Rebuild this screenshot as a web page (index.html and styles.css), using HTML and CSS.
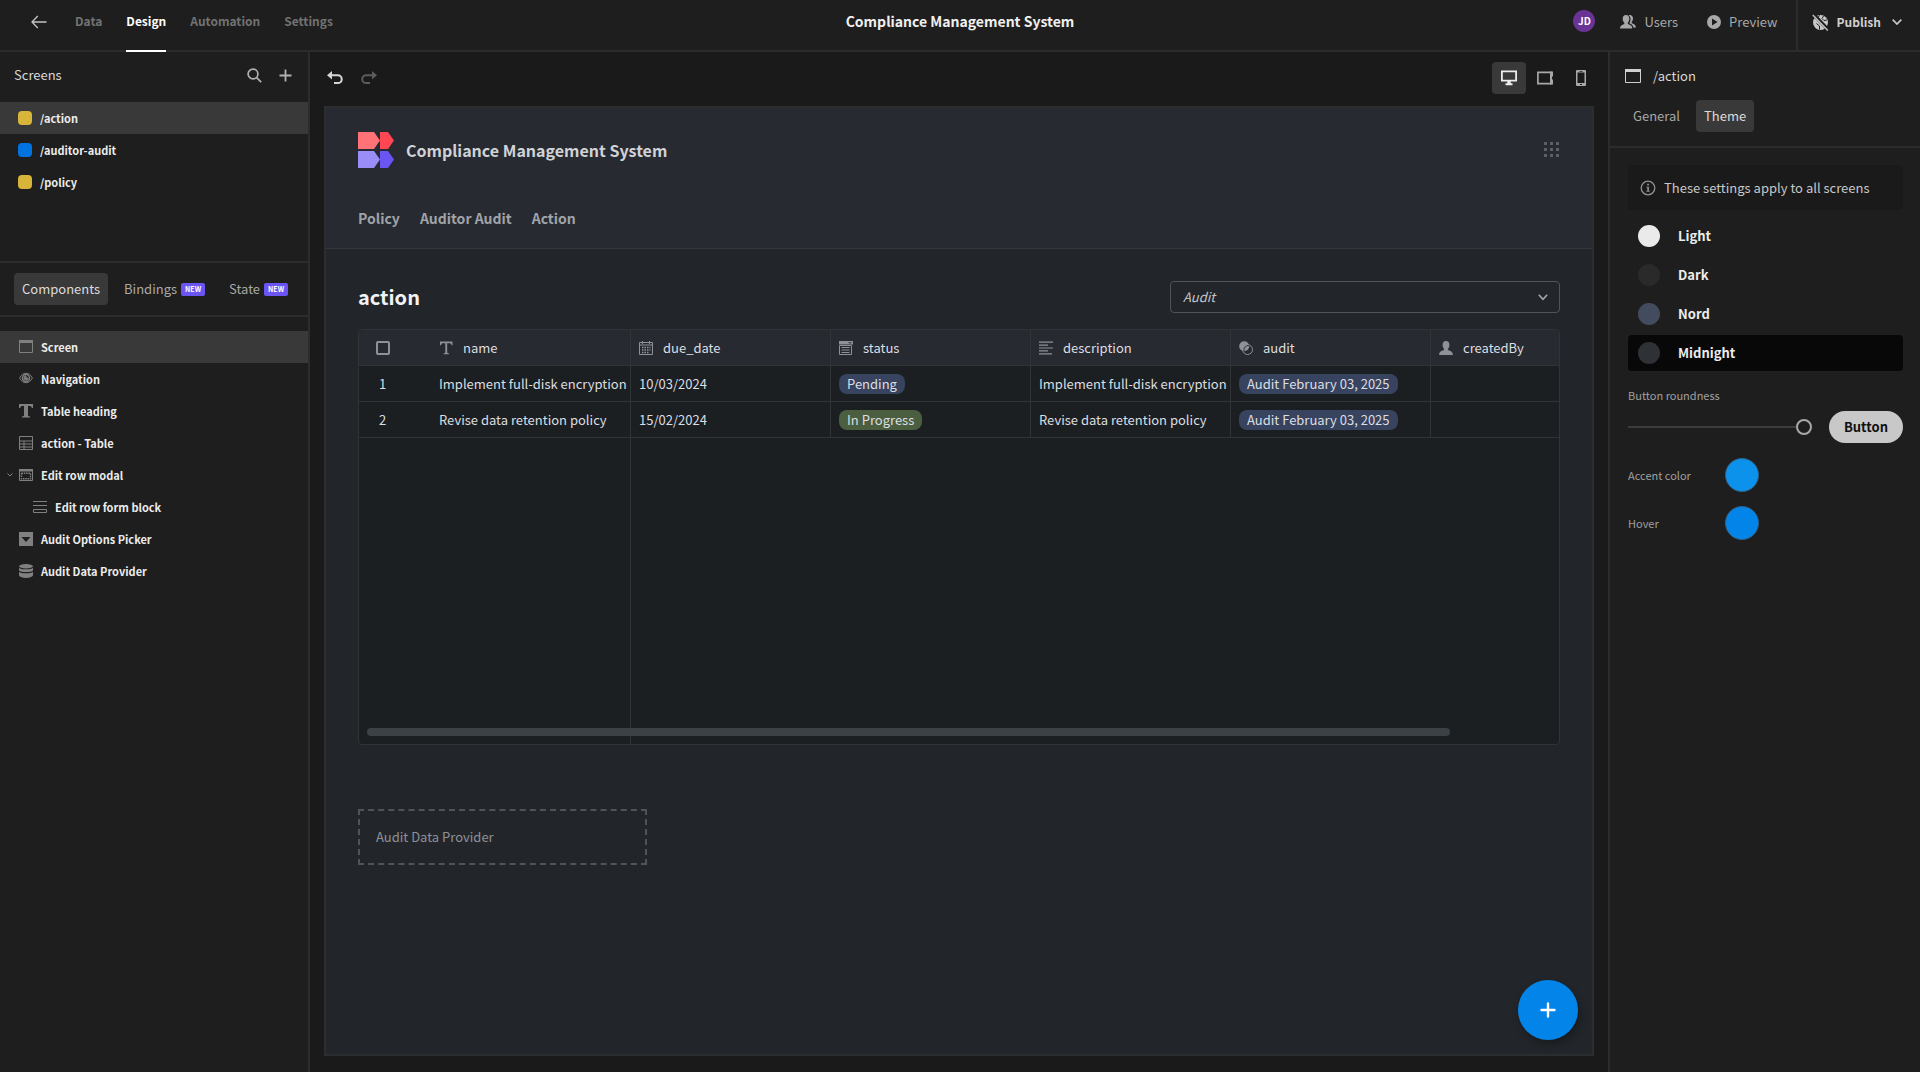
FILE: index.html
```html
<!DOCTYPE html>
<html lang="en">
<head>
    <meta charset="UTF-8">
    <meta name="viewport" content="width=device-width, initial-scale=1.0">
    <title>Compliance Management System</title>
    <link rel="stylesheet" href="styles.css">
</head>
<body>

<header class="topbar">
    <nav class="topbar-nav">
        <a href="#" class="back" aria-label="Back">
            <svg width="16" height="16" viewBox="0 0 16 16" fill="none" stroke="#c4c4c4" stroke-width="1.3"><path d="M15.500 8H1M6.800 2 1 8l5.800 6"/></svg>
        </a>
        <a href="#">Data</a>
        <a href="#" class="active">Design</a>
        <a href="#">Automation</a>
        <a href="#">Settings</a>
    </nav>
    <h1 class="topbar-title">Compliance Management System</h1>
    <div class="topbar-actions">
        <span class="avatar">JD</span>
        <button class="top-button users">
            <svg width="16" height="16" viewBox="0 0 16 16" fill="#a8a8a8"><path d="M6 1C8.200 1 9.300 2.600 9.300 4.800c0 1.700-.7 3.200-1.500 4v1.100c1.700.7 4 1.300 4.300 3.400l.1 1.200H0c0-3 2.500-3.800 4.300-4.600V8.800C3.400 8 2.700 6.500 2.700 4.800 2.700 2.600 3.800 1 6 1z"/><path d="M9.300 1c2-.3 3.700 1 3.700 3.300 0 1.700-.6 3-1.400 3.800v1c1.700.8 4.200 1.600 4.400 4.400h-2.600c-.4-2.300-2-3.400-4.100-4.200 1.700-2.600 2-6-.8-8z"/></svg>
            Users
        </button>
        <button class="top-button">
            <svg width="14" height="14" viewBox="0 0 14 14" fill="#a8a8a8"><path fill-rule="evenodd" d="M7 0a7 7 0 1 0 0 14A7 7 0 0 0 7 0zM5 3.500 10.600 7 5 10.500z"/></svg>
            Preview
        </button>
        <button class="top-button publish">
            <svg width="17" height="17" viewBox="0 0 17 17"><circle cx="8.500" cy="8.500" r="7.500" fill="#c8c8c8"/><path d="M7.500 1.500 6 3.500l1.500 1M11.500 2 10 4.500l2 2 3-.5M7.500 15.500V12L4.500 9.500" fill="none" stroke="#1e1e1e" stroke-width="1"/><path d="m1.500.5 15 15.500" stroke="#1e1e1e" stroke-width="3.500"/><path d="m.8 1 15 15.500" stroke="#c8c8c8" stroke-width="1.400"/></svg>
            Publish
            <svg class="chev" width="10" height="6" viewBox="0 0 10 6" fill="none" stroke="#c8c8c8" stroke-width="1.700"><path d="m.7.7 4.300 4.300L9.300.7"/></svg>
        </button>
    </div>
</header>

<div class="workspace">
    <aside class="left-panel">
        <section class="screens">
            <div class="screens-head">
                <h2>Screens</h2>
                <button class="icon-button" aria-label="Search">
                    <svg width="15" height="15" viewBox="0 0 15 15" fill="none" stroke="#b0b0b0" stroke-width="1.700"><circle cx="6" cy="6" r="4.900"/><path d="m9.600 9.600 4.600 4.600"/></svg>
                </button>
                <button class="icon-button" aria-label="Add screen">
                    <svg width="13" height="13" viewBox="0 0 13 13" stroke="#b0b0b0" stroke-width="1.800"><path d="M6.500.5v12M.5 6.500h12"/></svg>
                </button>
            </div>
            <ul class="list">
                <li><button class="row selected"><span class="swatch yellow"></span>/action</button></li>
                <li><button class="row"><span class="swatch blue"></span>/auditor-audit</button></li>
                <li><button class="row"><span class="swatch yellow"></span>/policy</button></li>
            </ul>
        </section>

        <div class="tabs left-tabs">
            <button class="tab active">Components</button>
            <button class="tab">Bindings <span class="badge">NEW</span></button>
            <button class="tab">State <span class="badge">NEW</span></button>
        </div>

        <ul class="list tree">
            <li><button class="row selected">
                <svg width="14" height="14" viewBox="0 0 14 14"><path d="M.5 1.500h13v11H.5z" fill="none" stroke="#808080"/><path d="M0 0h14v3H0z" fill="#808080"/></svg>
                Screen
            </button></li>
            <li><button class="row">
                <svg width="14" height="14" viewBox="0 0 14 14" fill="none" stroke="#808080"><path d="M.6 6C2.500 2.500 4.500 1.300 7 1.300S11.500 2.500 13.400 6C11.500 9.500 9.500 10.700 7 10.700S2.500 9.500.6 6z"/><circle cx="7" cy="6" r="3.500" stroke-width="1.500"/><path d="M7 4a2 2 0 1 0 2 2H7z" fill="#808080"/></svg>
                Navigation
            </button></li>
            <li><button class="row">
                <svg width="14" height="14" viewBox="0 0 14 14" fill="#808080"><path d="M0 0h14v4h-1.200c-.3-1.500-.8-2-2.500-2H9v9c0 1 .4 1.300 2 1.400V13.500H3v-1.100c1.600-.1 2-.4 2-1.400V2H3.700c-1.700 0-2.200.5-2.500 2H0z"/></svg>
                Table heading
            </button></li>
            <li><button class="row">
                <svg width="14" height="14" viewBox="0 0 14 14" fill="none" stroke="#808080"><path d="M.5.5h13v13H.5zM.5 5h13M.5 8h13M.5 11h13M5 5v8.500"/></svg>
                action - Table
            </button></li>
            <li><button class="row">
                <svg class="caret" width="6" height="4" viewBox="0 0 6 4" fill="none" stroke="#808080"><path d="m.5.5 2.500 2.500L5.500.5"/></svg>
                <svg width="14" height="14" viewBox="0 0 14 14"><path d="M.5 1.500h13v11H.5z" fill="none" stroke="#808080"/><path d="M0 1h14v2.500H0z" fill="#808080"/><path d="M2.500 5.200h9v5.600h-9z" fill="none" stroke="#808080" stroke-width="1.400" stroke-dasharray="1.500 .8"/></svg>
                Edit row modal
            </button></li>
            <li><button class="row nested">
                <svg width="14" height="14" viewBox="0 0 14 14" fill="none" stroke="#808080"><path d="M0 1.500h14M0 5.500h14M.5 9.500h13v3H.5z"/></svg>
                Edit row form block
            </button></li>
            <li><button class="row">
                <svg width="14" height="14" viewBox="0 0 14 14"><path d="M0 0h14v14H0z" fill="#808080"/><path d="M2.500 5h9L7 10z" fill="#1e1e1e"/></svg>
                Audit Options Picker
            </button></li>
            <li><button class="row">
                <svg width="14" height="14" viewBox="0 0 14 14" fill="#808080"><ellipse cx="7" cy="2.200" rx="7" ry="2.200"/><path d="M0 3.700c2 2 12 2 14 0v2.800c-1.500 2.100-12.500 2.100-14 0zM0 7.700c2 2 12 2 14 0v3.800c-1.500 3.200-12.500 3.200-14 0z"/></svg>
                Audit Data Provider
            </button></li>
        </ul>
    </aside>

    <main class="canvas">
        <div class="toolbar">
            <button class="icon-button" aria-label="Undo">
                <svg width="16" height="14" viewBox="0 0 16 14"><path d="M3.500 4.200h7.300a3.900 3.900 0 0 1 0 7.900H7" fill="none" stroke="#d6d6d6" stroke-width="2"/><path d="M0 4.200 5 0v8.400z" fill="#d6d6d6"/></svg>
            </button>
            <button class="icon-button" aria-label="Redo" disabled>
                <svg width="16" height="14" viewBox="0 0 16 14"><path d="M12.500 4.200H5.200a3.900 3.900 0 0 0 0 7.900H9" fill="none" stroke="#5c5c5c" stroke-width="2"/><path d="M16 4.200 11 0v8.400z" fill="#5c5c5c"/></svg>
            </button>
            <div class="devices">
                <button class="device active" aria-label="Desktop">
                    <svg width="16" height="16" viewBox="0 0 16 16"><path d="M.9 1.400h14.200v9.200H.9z" fill="none" stroke="#ececec" stroke-width="1.800"/><path d="M6.300 11h3.400v2.300h1.800v1.900h-7v-1.900h1.800z" fill="#ececec"/></svg>
                </button>
                <button class="device" aria-label="Tablet">
                    <svg width="16" height="14" viewBox="0 0 16 14"><path d="M.9 1.400h13v11.200H.9z" fill="none" stroke="#a8a8a8" stroke-width="1.700"/><path d="M13 .5h3v5h-1v3h1v5h-3z" fill="#a8a8a8"/></svg>
                </button>
                <button class="device" aria-label="Mobile">
                    <svg width="10" height="16" viewBox="0 0 10 16"><path fill-rule="evenodd" d="M1 0h8a1 1 0 0 1 1 1v14a1 1 0 0 1-1 1H1a1 1 0 0 1-1-1V1a1 1 0 0 1 1-1zm.5 2.500v10.500h7V2.500zM4 14v1h2v-1zM3.500.9v.8h3V.9z" fill="#a8a8a8"/></svg>
                </button>
            </div>
        </div>

        <div class="preview">
            <header class="app-header">
                <div class="app-brand">
                    <svg width="36" height="36" viewBox="0 0 36 36"><path d="M0 0h16l6 8.500-6 8.500H0z" fill="#ff7377"/><path d="M22 0h8l6 8.500-6 8.500h-8z" fill="#ff4653"/><path d="M0 19h16l6 8.500-6 8.500H0z" fill="#9a8df8"/><path d="M22 19h8l6 8.500-6 8.500h-8z" fill="#6a55f2"/></svg>
                    <span>Compliance Management System</span>
                    <button class="apps" aria-label="Apps">
                        <svg width="16" height="16" viewBox="0 0 16 16" fill="#5b5f66"><path d="M0 0h3v3H0zM6 0h3v3H6zM12 0h3v3h-3zM0 6h3v3H0zM6 6h3v3H6zM12 6h3v3h-3zM0 12h3v3H0zM6 12h3v3H6zM12 12h3v3h-3z"/></svg>
                    </button>
                </div>
                <nav class="app-nav">
                    <a href="#">Policy</a>
                    <a href="#">Auditor Audit</a>
                    <a href="#">Action</a>
                </nav>
            </header>

            <div class="app-body">
                <div class="heading-row">
                    <h2>action</h2>
                    <div class="select-wrap">
                        <select aria-label="Audit"><option>Audit</option></select>
                        <svg width="10" height="7" viewBox="0 0 10 7" fill="none" stroke="#a4a7ac" stroke-width="1.600"><path d="m.8.8 4.200 4.500L9.200.8"/></svg>
                    </div>
                </div>

                <div class="grid">
                    <table>
                        <colgroup><col class="col-check"><col><col><col><col><col><col></colgroup>
                        <thead>
                            <tr>
                                <th class="check"><input type="checkbox" aria-label="Select all rows"></th>
                                <th class="sticky"><div class="th"><svg width="14" height="14" viewBox="0 0 14 14" fill="#8e9198"><path d="M1 .5h12.500v3.800h-1c-.3-1.500-.8-2-2-2H8.200V11c0 .9.3 1.200 1.700 1.300v1H4.600v-1c1.400-.1 1.700-.4 1.700-1.300V2.300H4c-1.200 0-1.700.5-2 2H1z"/></svg>name</div></th>
                                <th><div class="th"><svg width="14" height="14" viewBox="0 0 14 14" fill="none" stroke="#8e9198"><path d="M.5 1.500h13v12H.5zM.5 4h13M3.500 0v3M10.500 0v3"/><path d="M3 6.500h8.500M3 9h8.500M3 11.500h6.500" stroke-width="1.500" stroke-dasharray="1.500 1"/></svg>due_date</div></th>
                                <th><div class="th"><svg width="14" height="14" viewBox="0 0 14 14" fill="none" stroke="#8e9198"><path d="M.5 4.500h12v9H.5z"/><path d="M0 0h14v3.500H0z" fill="#8e9198" stroke="none"/><path d="M2.500 6.500h8M2.500 9h8M2.500 11.500h8"/><path d="m9.500 1 1.500 1.500L12.500 1" stroke="#272a31"/></svg>status</div></th>
                                <th><div class="th"><svg width="14" height="14" viewBox="0 0 14 14" stroke="#8e9198" stroke-width="1.200"><path d="M0 1.200h14M0 4.100h9M0 7h14M0 9.900h9M0 12.800h13"/></svg>description</div></th>
                                <th><div class="th"><svg width="14" height="14" viewBox="0 0 14 14"><circle cx="5.200" cy="5.200" r="5" fill="#8e9198"/><circle cx="8.600" cy="8.600" r="4.900" fill="none" stroke="#8e9198"/><path d="M5 10a4.500 4.500 0 0 1 5-5.500" fill="none" stroke="#272a31" stroke-width=".9"/></svg>audit</div></th>
                                <th><div class="th"><svg width="14" height="14" viewBox="0 0 14 14" fill="#8e9198"><path d="M7 0c2.300 0 3.400 1.700 3.400 3.900 0 1.700-.7 3.200-1.500 4v1.200c2 .7 5 1.300 5 4.900H.1c0-3.600 3-4.200 5-4.900V7.900c-.8-.8-1.500-2.300-1.500-4C3.600 1.700 4.700 0 7 0z"/></svg>createdBy</div></th>
                            </tr>
                        </thead>
                        <tbody>
                            <tr>
                                <td class="check">1</td>
                                <td class="sticky">Implement full-disk encryption</td>
                                <td>10/03/2024</td>
                                <td><span class="pill blue">Pending</span></td>
                                <td>Implement full-disk encryption</td>
                                <td><span class="pill blue">Audit February 03, 2025</span></td>
                                <td></td>
                            </tr>
                            <tr>
                                <td class="check">2</td>
                                <td class="sticky">Revise data retention policy</td>
                                <td>15/02/2024</td>
                                <td><span class="pill green">In Progress</span></td>
                                <td>Revise data retention policy</td>
                                <td><span class="pill blue">Audit February 03, 2025</span></td>
                                <td></td>
                            </tr>
                            <!-- Empty space under the rows -->
                            <tr class="filler"><td></td><td class="sticky"></td><td colspan="5"></td></tr>
                        </tbody>
                    </table>
                    <div class="scrollbar"></div>
                </div>

                <div class="provider">Audit Data Provider</div>
            </div>

            <button class="fab" aria-label="Add">
                <svg width="16" height="16" viewBox="0 0 16 16" stroke="#fff" stroke-width="2.400" stroke-linecap="round"><path d="M8 1.500v13M1.500 8h13"/></svg>
            </button>
        </div>
    </main>

    <aside class="right-panel">
        <div class="panel-head">
            <div class="panel-title">
                <svg width="16" height="14" viewBox="0 0 16 14"><path d="M.5.5h15v13H.5z" fill="none" stroke="#d0d0d0"/><path d="M0 0h16v3H0z" fill="#d0d0d0"/></svg>
                <h2>/action</h2>
            </div>
            <div class="tabs">
                <button class="tab">General</button>
                <button class="tab active">Theme</button>
            </div>
        </div>

        <div class="settings">
            <div class="info">
                <svg width="16" height="16" viewBox="0 0 16 16"><circle cx="8" cy="8" r="6.800" fill="none" stroke="#929292" stroke-width="1.300"/><path d="M7.200 3.800h1.700v1.700H7.200zM6.500 6.800h2.400v4h.8v1H6.400v-1h.9v-3h-.8z" fill="#929292"/></svg>
                These settings apply to all screens
            </div>
            <div class="themes">
                <button class="theme"><span class="dot light"></span>Light</button>
                <button class="theme"><span class="dot dark"></span>Dark</button>
                <button class="theme"><span class="dot nord"></span>Nord</button>
                <button class="theme selected"><span class="dot midnight"></span>Midnight</button>
            </div>
            <label class="field-label" for="roundness">Button roundness</label>
            <div class="roundness">
                <input type="range" id="roundness" min="0" max="16" value="16">
                <button class="sample">Button</button>
            </div>
            <div class="color-field">
                <span class="field-label">Accent color</span>
                <button class="color accent" aria-label="Accent color"></button>
            </div>
            <div class="color-field">
                <span class="field-label">Hover</span>
                <button class="color hover" aria-label="Hover color"></button>
            </div>
        </div>
    </aside>
</div>

</body>
</html>
```
FILE: styles.css
```css
* {
    box-sizing: border-box;
}

body {
    margin: 0;
    height: 100vh;
    display: flex;
    flex-direction: column;
    background: #1a1a1a;
    color: #e8e8e8;
    font-family: "Noto Sans CJK SC", "Open Sans", sans-serif;
    font-size: 13px;
    line-height: 18px;
    overflow: hidden;
}

h1, h2, ul {
    margin: 0;
    padding: 0;
}

ul {
    list-style: none;
}

a {
    color: inherit;
    text-decoration: none;
}

button {
    border: none;
    padding: 0;
    background: none;
    color: inherit;
    font: inherit;
    display: flex;
    align-items: center;
}

svg {
    display: block;
    flex-shrink: 0;
}

/* Top bar */
.topbar {
    display: grid;
    grid-template-columns: 1fr auto 1fr;
    height: 52px;
    flex-shrink: 0;
    background: #1e1e1e;
    border-bottom: 2px solid #2c2c2c;
}

.topbar-nav {
    display: flex;
    gap: 24px;
    padding-left: 31px;
    height: 52px;
    font-size: 12px;
    font-weight: bold;
    color: #727272;
}

.topbar-nav a {
    padding-top: 12px;
}

.topbar-nav .back {
    padding-top: 14px;
    margin-right: 4px;
}

.topbar-nav .active {
    color: #fff;
    border-bottom: 2px solid #fff;
}

.topbar-title {
    padding-top: 12px;
    font-size: 14px;
    line-height: 18px;
    color: #f0f0f0;
}

.topbar-actions {
    display: flex;
    justify-content: flex-end;
}

.avatar {
    width: 22px;
    height: 22px;
    margin: 10px 25px 0 0;
    border-radius: 50%;
    background: #6a3396;
    color: #fff;
    font-size: 10px;
    line-height: 22px;
    font-weight: bold;
    text-align: center;
}

.top-button {
    gap: 8px;
    padding-bottom: 8px;
    color: #a8a8a8;
}

.users {
    margin-right: 29px;
}

.publish {
    margin-left: 18px;
    padding-left: 14px;
    padding-right: 18px;
    border-left: 2px solid #2c2c2c;
    color: #d0d0d0;
    font-size: 12px;
    font-weight: bold;
}

.chev {
    margin-left: 3px;
}

.workspace {
    display: flex;
    flex: 1;
    min-height: 0;
}

/* Left panel */
.left-panel {
    width: 310px;
    flex-shrink: 0;
    background: #1e1e1e;
    border-right: 2px solid #2c2c2c;
}

.screens {
    height: 211px;
    border-bottom: 2px solid #2c2c2c;
}

.screens-head {
    display: flex;
    align-items: center;
    gap: 17px;
    height: 50px;
    padding: 0 16px 4px 14px;
}

.screens-head h2 {
    flex: 1;
    font-size: 13px;
    font-weight: normal;
    color: #d8d8d8;
}

.row {
    width: 100%;
    height: 32px;
    padding-left: 18px;
    gap: 8px;
    font-size: 11px;
    font-weight: bold;
    color: #ececec;
}

.row.selected {
    background: #393939;
}

.swatch {
    width: 14px;
    height: 14px;
    border-radius: 4px;
}

.swatch.yellow {
    background: #d9b43b;
}

.swatch.blue {
    background: #0073e0;
}

.tabs {
    display: flex;
    gap: 8px;
}

.tab {
    height: 32px;
    padding: 0 8px;
    gap: 4px;
    border-radius: 4px;
    color: #a8a8a8;
}

.tab.active {
    background: #393939;
    color: #dcdcdc;
}

.left-tabs {
    padding: 10px 14px;
    border-bottom: 2px solid #2c2c2c;
}

.badge {
    height: 13px;
    padding: 0 4px;
    border-radius: 2px;
    background: #6a55f2;
    color: #fff;
    font-size: 7px;
    line-height: 13px;
    font-weight: bold;
}

.tree {
    padding-top: 14px;
}

.tree .row {
    position: relative;
    padding-left: 19px;
}

.tree .row.nested {
    padding-left: 33px;
}

.caret {
    position: absolute;
    left: 7px;
    top: 14px;
}

/* Canvas */
.canvas {
    flex: 1;
    min-width: 0;
    display: flex;
    flex-direction: column;
    padding: 0 14px 16px;
}

.toolbar {
    display: flex;
    align-items: center;
    gap: 18px;
    height: 54px;
    padding: 0 0 3px 3px;
    margin-right: -4px;
}

.devices {
    display: flex;
    gap: 2px;
    margin-left: auto;
}

.device {
    width: 34px;
    height: 32px;
    justify-content: center;
    border-radius: 4px;
}

.device.active {
    background: #393939;
}

.preview {
    position: relative;
    flex: 1;
    border: 2px solid #2b2d2e;
    background: #22262a;
}

.app-header {
    padding: 24px 32px 19px;
    background: #272a31;
    border-bottom: 1px solid #35383b;
}

.app-brand {
    display: flex;
    align-items: center;
    gap: 12px;
    font-size: 16px;
    line-height: 24px;
    font-weight: bold;
    color: #d0d2d6;
}

.apps {
    margin-left: auto;
}

.app-nav {
    display: flex;
    gap: 20px;
    margin-top: 39px;
    font-size: 14px;
    line-height: 22px;
    font-weight: bold;
    color: #a0a3a8;
}

.app-body {
    padding: 32px;
}

.heading-row {
    display: flex;
    justify-content: space-between;
    align-items: center;
    margin-bottom: 16px;
}

.heading-row h2 {
    font-size: 20px;
    line-height: 32px;
    color: #f2f3f5;
}

.select-wrap {
    position: relative;
    width: 390px;
}

.select-wrap select {
    width: 100%;
    height: 32px;
    padding: 0 12px;
    appearance: none;
    background: transparent;
    border: 1px solid #50545a;
    border-radius: 4px;
    color: #c4c6ca;
    font: inherit;
    font-style: italic;
}

.select-wrap svg {
    position: absolute;
    right: 12px;
    top: 13px;
}

/* Data grid */
.grid {
    position: relative;
    height: 416px;
    overflow: hidden;
    border: 1px solid #303437;
    border-radius: 4px;
    background: #1b1f22;
}

.grid table {
    width: 1272px;
    height: 100%;
    table-layout: fixed;
    border-collapse: separate;
    border-spacing: 0;
}

.col-check {
    width: 72px;
}

.grid th, .grid td {
    height: 36px;
    padding: 0 8px;
    border-bottom: 1px solid #303437;
    border-right: 1px solid #303437;
    text-align: left;
    font-weight: normal;
    white-space: nowrap;
    overflow: hidden;
    color: #dcdee1;
}

.grid th {
    background: #272a31;
}

.grid .check {
    padding: 0 16px;
    border-right: none;
}

.grid td.check {
    padding-left: 20px;
}

.grid input {
    display: block;
    appearance: none;
    width: 14px;
    height: 14px;
    margin: 0 1px;
    border: 2px solid #8e9198;
    border-radius: 2px;
}

.th {
    display: flex;
    align-items: center;
    gap: 10px;
}

.grid .filler td {
    height: auto;
    border-bottom: none;
    border-right: none;
}

.grid .filler .sticky {
    border-right: 1px solid #303437;
}

.pill {
    display: inline-block;
    height: 20px;
    padding: 0 8px;
    border-radius: 8px;
    line-height: 20px;
    vertical-align: middle;
}

.pill.blue {
    background: #38445f;
}

.pill.green {
    background: #4b5f40;
}

.scrollbar {
    position: absolute;
    left: 8px;
    right: 109px;
    bottom: 8px;
    height: 8px;
    border-radius: 4px;
    background: #3c4146;
}

.provider {
    width: 289px;
    margin-top: 64px;
    padding: 17px 16px;
    border: 2px dashed #50545a;
    color: #8e9198;
}

.fab {
    position: absolute;
    right: 14px;
    bottom: 14px;
    width: 60px;
    height: 60px;
    justify-content: center;
    border-radius: 50%;
    background: #0384e8;
    box-shadow: 2px 4px 8px rgba(0, 0, 0, 0.3);
}

/* Right panel */
.right-panel {
    width: 312px;
    flex-shrink: 0;
    background: #1e1e1e;
    border-left: 2px solid #2c2c2c;
}

.panel-head {
    padding: 15px 15px 14px;
    border-bottom: 2px solid #2c2c2c;
}

.panel-title {
    display: flex;
    align-items: center;
    gap: 12px;
    margin-bottom: 15px;
}

.panel-title h2 {
    font-size: 13px;
    font-weight: normal;
    color: #d8d8d8;
}

.settings {
    padding: 17px 17px 0 18px;
}

.info {
    display: flex;
    align-items: center;
    gap: 8px;
    height: 45px;
    padding-left: 12px;
    border-radius: 4px;
    background: #1a1a1a;
    color: #c8c8c8;
}

.themes {
    display: flex;
    flex-direction: column;
    gap: 3px;
    margin: 8px 0 15px;
}

.theme {
    width: 100%;
    height: 36px;
    padding-left: 10px;
    gap: 18px;
    border-radius: 4px;
    font-weight: bold;
    color: #ececec;
}

.theme.selected {
    background: #080808;
}

.dot {
    width: 22px;
    height: 22px;
    border-radius: 50%;
}

.dot.light {
    background: #eaeaea;
}

.dot.dark {
    background: #2a2a2a;
}

.dot.nord {
    background: #434c5e;
}

.dot.midnight {
    background: #2e3136;
}

.field-label {
    display: block;
    font-size: 11px;
    color: #a0a0a0;
}

.roundness {
    display: flex;
    align-items: center;
    gap: 17px;
    margin: 7px 0 15px;
}

.roundness input {
    flex: 1;
    min-width: 0;
    height: 16px;
    margin: 0;
    appearance: none;
    background: linear-gradient(#3c3c3c, #3c3c3c) 0 50% / calc(100% - 8px) 2px no-repeat;
}

.roundness input::-webkit-slider-thumb {
    appearance: none;
    width: 16px;
    height: 16px;
    border: 2px solid #a8a8a8;
    border-radius: 50%;
    background: #1e1e1e;
}

.sample {
    height: 32px;
    padding: 0 15px;
    border-radius: 16px;
    background: #c8c8c8;
    color: #101010;
    font-weight: bold;
}

.color-field {
    display: flex;
    align-items: center;
    margin-bottom: 14px;
}

.color-field .field-label {
    width: 97px;
}

.color {
    width: 34px;
    height: 34px;
    border: 1px solid #2f6187;
    border-radius: 50%;
}

.color.accent {
    background: #0d92ec;
}

.color.hover {
    background: #0384e8;
}
```
